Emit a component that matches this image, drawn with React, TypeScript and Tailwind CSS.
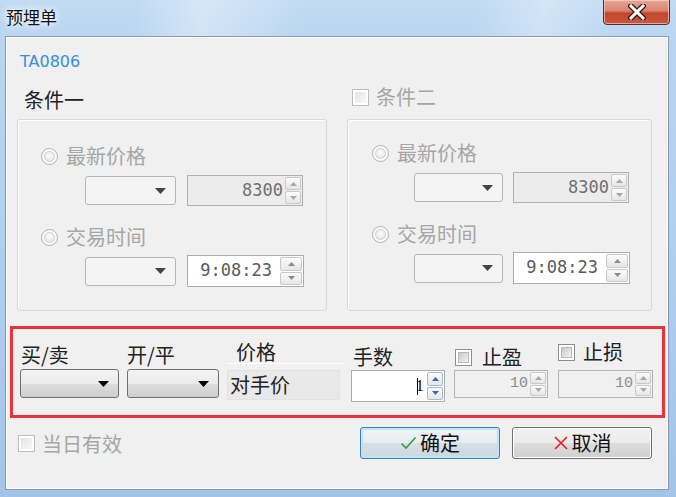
import React from 'react'

function Tri({ up, color }: { up?: boolean; color: string }) {
    return (
        <svg width="7" height="4" viewBox="0 0 7 4">
            <polygon points={up ? '0,4 7,4 3.5,0' : '0,0 7,0 3.5,4'} fill={color} />
        </svg>
    )
}

function Radio() {
    return (
        <div className="w-[17px] h-[17px] rounded-full border border-[#b0b0b0] bg-[#fafafa] flex items-center justify-center">
            <div className="w-[11px] h-[11px] rounded-full border border-[#d0d0d0] bg-[radial-gradient(circle_at_50%_40%,#f7f7f7_20%,#dedede_100%)]" />
        </div>
    )
}

function Check({ on }: { on?: boolean }) {
    return (
        <div className={`w-[17px] h-[17px] border bg-white p-[2px] ${on ? 'border-[#8c8e90]' : 'border-[#bdbdbd]'}`}>
            <div className={`w-full h-full ${on ? 'bg-[linear-gradient(135deg,#c9c9c9,#f3f3f3)] border border-[#b6b6b6]' : 'bg-[linear-gradient(135deg,#e4e4e4,#f8f8f8)]'}`} />
        </div>
    )
}

function Combo({ size, active }: { size: string; active?: boolean }) {
    return (
        <div
            className={`${size} rounded-[3px] border flex items-center justify-end pr-[9px] ${
                active
                    ? 'border-[#707070] bg-[linear-gradient(180deg,#f3f3f3_0%,#ebebeb_50%,#dddddd_51%,#cfcfcf_100%)]'
                    : 'border-[#b3b7ba] bg-[#f4f4f4]'
            }`}
        >
            <svg width="11" height="6" viewBox="0 0 11 6">
                <polygon points="0,0 11,0 5.5,6" fill={active ? '#000' : '#444'} />
            </svg>
        </div>
    )
}

function Spin({
    value,
    size,
    box,
    text,
    btn,
    arrow,
    edge = 'border-[#c9c9c9]',
    children,
}: {
    value: string
    size: string
    box: string
    text: string
    btn: string
    arrow: string
    edge?: string
    children?: React.ReactNode
}) {
    return (
        <div className={`${size} ${box} border flex`}>
            <div className={`flex-1 flex items-center justify-end ${text}`}>
                {children}
                {value}
            </div>
            <div className={`${btn} flex flex-col gap-[1px] py-[1px] pr-[1px]`}>
                <div className={`flex-1 rounded-[2px] border ${edge} bg-[linear-gradient(180deg,#fbfbfb,#e6e6e6)] flex items-center justify-center`}>
                    <Tri up color={arrow} />
                </div>
                <div className={`flex-1 rounded-[2px] border ${edge} bg-[linear-gradient(180deg,#fbfbfb,#e6e6e6)] flex items-center justify-center`}>
                    <Tri color={arrow} />
                </div>
            </div>
        </div>
    )
}

function ConditionGroup({ pad, gap, combo }: { pad: string; gap: string; combo: string }) {
    return (
        <div className={`h-[192px] rounded-[3px] border border-[#d5d9dc] shadow-[inset_1px_1px_0_#fff] ${pad}`}>
            <div className="flex items-center h-[18px] gap-[8px]">
                <Radio />
                <span className="text-[20px] leading-[24px] text-[#a6a6a6]">最新价格</span>
            </div>
            <div className={`flex items-center mt-[10px] ${gap}`}>
                <Combo size={combo} />
                <Spin
                    value="8300"
                    size="w-[116px] h-[31px]"
                    box="border-[#b0b0b0] bg-[#ececec]"
                    text="pr-[2px] font-['DejaVu_Sans_Mono',monospace] text-[17px] text-[#707070]"
                    btn="w-[17px]"
                    arrow="#a8a8a8"
                />
            </div>
            <div className="flex items-center h-[18px] gap-[8px] mt-[22px]">
                <Radio />
                <span className="text-[20px] leading-[24px] text-[#a6a6a6]">交易时间</span>
            </div>
            <div className={`flex items-center mt-[9px] ${gap}`}>
                <Combo size={combo} />
                <Spin
                    value="9:08:23"
                    size="w-[117px] h-[32px]"
                    box="border-[#acacac] bg-white"
                    text="pr-[8px] font-['DejaVu_Sans_Mono',monospace] text-[17px] text-[#5a5a5a]"
                    btn="w-[23px]"
                    arrow="#8a8a8a"
                />
            </div>
        </div>
    )
}

function Button({ children, primary }: { children: React.ReactNode; primary?: boolean }) {
    return (
        <div
            className={`w-[140px] h-[32px] rounded-[3px] border flex items-center justify-center gap-[3px] text-[20px] leading-[24px] text-[#111] ${
                primary
                    ? 'border-[#3c7fb1] bg-[linear-gradient(180deg,#f0f4f7_0%,#e6ecf0_50%,#d7e0e6_51%,#cbd6de_100%)] shadow-[inset_0_0_0_2px_#c4e2f5]'
                    : 'border-[#707070] bg-[linear-gradient(180deg,#f2f2f2_0%,#ebebeb_50%,#dddddd_51%,#cfcfcf_100%)] shadow-[inset_0_0_0_1px_#fff]'
            }`}
        >
            {children}
        </div>
    )
}

export default function App() {
    return (
        <div className="w-[676px] h-[497px] overflow-hidden flex flex-col font-['Noto_Sans_CJK_SC',sans-serif] bg-[linear-gradient(180deg,#c2dbf3_0%,#b9d5f1_8%,#aecdee_60%,#a3c4e6_100%)]">
            {/* title bar */}
            <div className="h-[36px] flex items-start bg-[linear-gradient(100deg,transparent_0%,transparent_20%,rgba(255,255,255,0.35)_30%,transparent_45%,transparent_70%,rgba(255,255,255,0.3)_80%,transparent_92%)]">
                <span className="ml-[6px] mt-[5px] text-[17px] leading-[24px] text-[#111] [text-shadow:0_0_6px_#fff,0_0_10px_#fff]">
                    预埋单
                </span>
                <div className="ml-auto mr-[6px] mt-[-1px] w-[67px] h-[26px] rounded-b-[4px] border border-[#5b2a22] shadow-[inset_0_0_0_1px_rgba(255,220,210,0.6)] bg-[linear-gradient(180deg,#e6a898_0%,#d98470_45%,#c4452c_55%,#c65a3f_100%)] flex items-center justify-center">
                    <svg width="18" height="16" viewBox="0 0 18 16">
                        <path d="M3 2 L15 14 M15 2 L3 14" stroke="#3a1610" strokeWidth="5.5" strokeLinecap="square" />
                        <path d="M3 2 L15 14 M15 2 L3 14" stroke="#fff" strokeWidth="3" strokeLinecap="square" />
                    </svg>
                </div>
            </div>

            {/* client area */}
            <div className="ml-[5px] mr-[7px] h-[454px] border border-[#8497ae] bg-[#f0f0f0] shadow-[inset_0_0_0_1px_#fff] flex flex-col">
                <div className="ml-[14px] mt-[15px] h-[20px] leading-[20px] text-[16px] text-[#3a8ed8] font-['DejaVu_Sans',sans-serif]">
                    TA0806
                </div>

                <div className="flex mt-[16px] ml-[11px]">
                    <div className="w-[310px] flex flex-col">
                        <div className="h-[24px] leading-[24px] text-[20px] text-[#222] ml-[7px]">条件一</div>
                        <div className="mt-[7px]">
                            <ConditionGroup pad="pl-[23px] pt-[27px]" gap="gap-[11px] ml-[44px]" combo="w-[91px] h-[29px]" />
                        </div>
                    </div>
                    <div className="w-[305px] ml-[20px] flex flex-col">
                        <div className="h-[24px] flex items-center gap-[7px] ml-[5px] mt-[-3px] mb-[3px]">
                            <Check />
                            <span className="text-[20px] leading-[24px] text-[#a6a6a6]">条件二</span>
                        </div>
                        <div className="mt-[7px]">
                            <ConditionGroup pad="pl-[24px] pt-[24px]" gap="gap-[10px] ml-[42px]" combo="w-[89px] h-[29px]" />
                        </div>
                    </div>
                </div>

                {/* order row */}
                <div className="ml-[4px] mt-[15px] w-[655px] h-[92px] border-[3px] border-[#e8333a] flex text-[20px] text-[#222]">
                    <div className="ml-[7px] flex flex-col">
                        <div className="mt-[14px] h-[24px] leading-[24px] ml-[1px]">买/卖</div>
                        <div className="mt-[2px]">
                            <Combo size="w-[99px] h-[29px]" active />
                        </div>
                    </div>
                    <div className="ml-[8px] flex flex-col">
                        <div className="mt-[14px] h-[24px] leading-[24px]">开/平</div>
                        <div className="mt-[2px]">
                            <Combo size="w-[92px] h-[29px]" active />
                        </div>
                    </div>
                    <div className="ml-[8px] flex flex-col w-[118px]">
                        <div className="mt-[11px] h-[23px] leading-[24px] ml-[9px]">价格</div>
                        <div className="h-[1px] w-[118px] bg-white" />
                        <div className="mt-[6px] w-[113px] h-[30px] bg-[#e9e9e9] border border-[#e2e2e2] flex items-center pl-[2px] leading-[24px]">
                            对手价
                        </div>
                    </div>
                    <div className="ml-[6px] flex flex-col">
                        <div className="mt-[16px] h-[24px] leading-[24px] ml-[2px]">手数</div>
                        <div className="mt-[1px]">
                            <Spin
                                value="1"
                                size="w-[94px] h-[32px]"
                                box="border-[#abadb3] bg-white"
                                text="pr-[3px] font-['Liberation_Serif',serif] text-[17px] text-[#111]"
                                btn="w-[17px]"
                                arrow="#3d63b3"
                                edge="border-[#a9b8d0]"
                            >
                                <div className="w-[1px] h-[17px] bg-black mr-[-2px]" />
                            </Spin>
                        </div>
                    </div>
                    <div className="ml-[9px] flex flex-col">
                        <div className="mt-[16px] h-[24px] flex items-center gap-[10px] ml-[1px]">
                            <Check on />
                            <span className="leading-[24px]">止盈</span>
                        </div>
                        <div className="mt-[1px]">
                            <Spin
                                value="10"
                                size="w-[94px] h-[28px]"
                                box="border-[#b3b3b3] bg-[#f0f0f0]"
                                text="pr-[2px] font-['Liberation_Mono',monospace] text-[15px] text-[#8a8a8a]"
                                btn="w-[17px]"
                                arrow="#a8a8a8"
                            />
                        </div>
                    </div>
                    <div className="ml-[10px] flex flex-col">
                        <div className="mt-[11px] h-[24px] flex items-center gap-[8px]">
                            <Check on />
                            <span className="leading-[24px]">止损</span>
                        </div>
                        <div className="mt-[6px]">
                            <Spin
                                value="10"
                                size="w-[95px] h-[28px]"
                                box="border-[#b3b3b3] bg-[#f0f0f0]"
                                text="pr-[2px] font-['Liberation_Mono',monospace] text-[15px] text-[#8a8a8a]"
                                btn="w-[17px]"
                                arrow="#a8a8a8"
                            />
                        </div>
                    </div>
                </div>

                {/* bottom row */}
                <div className="flex items-center mt-[9px] ml-[12px] mr-[16px] h-[32px]">
                    <div className="flex items-center gap-[7px] mt-[1px]">
                        <Check />
                        <span className="text-[20px] leading-[24px] text-[#a6a6a6]">当日有效</span>
                    </div>
                    <div className="ml-auto flex gap-[12px]">
                        <Button primary>
                            <svg width="17" height="14" viewBox="0 0 17 14">
                                <path d="M1.5 7.5 L6 12 L15.5 1.5" stroke="#2f9e44" strokeWidth="1.6" fill="none" />
                            </svg>
                            <span>确定</span>
                        </Button>
                        <Button>
                            <svg width="16" height="16" viewBox="0 0 16 16">
                                <path d="M2 2 L14 14 M14 2 L2 14" stroke="#e02424" strokeWidth="1.7" fill="none" />
                            </svg>
                            <span>取消</span>
                        </Button>
                    </div>
                </div>
            </div>
        </div>
    )
}
